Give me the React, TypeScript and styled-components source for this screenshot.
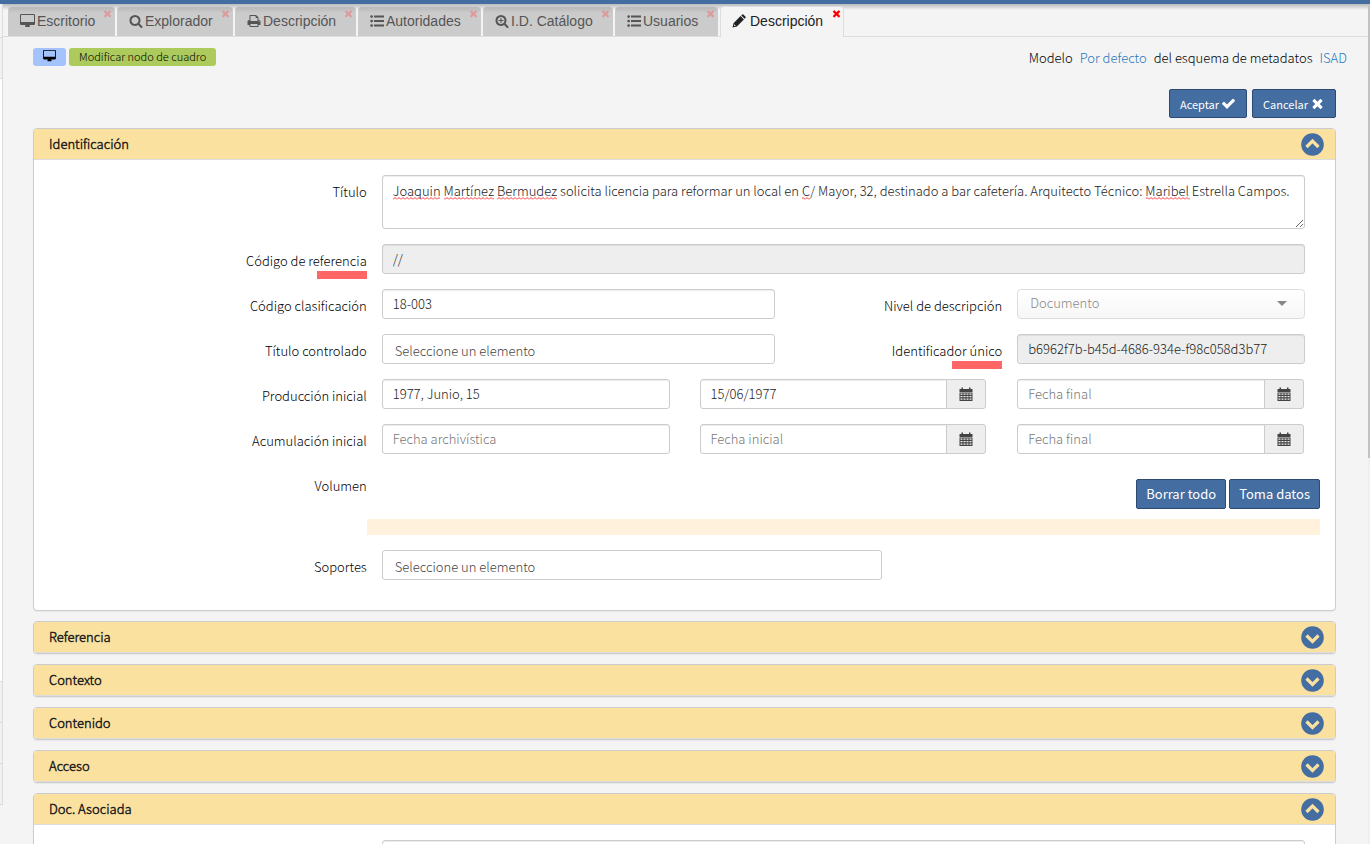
import React from 'react';
import styled, { createGlobalStyle } from 'styled-components';

const regular = '"Noto Sans CJK SC", "Noto Sans", sans-serif';
const light = `"Noto Sans CJK SC Light", ${regular}`;

const Global = createGlobalStyle`
  *, *::before, *::after { box-sizing: border-box; }
  html { background: #f4f4f4; overflow-x: hidden; }
  body { margin: 0; font: 300 13px/20px ${light}; color: #000; overflow: hidden; height: 100vh; }
  button, input, textarea, select { font: inherit; }
`;

const paths = {
  desktop: 'M1728 992v-832q0-13-9.5-22.5t-22.5-9.5h-1600q-13 0-22.5 9.5t-9.5 22.5v832q0 13 9.5 22.5t22.5 9.5h1600q13 0 22.5-9.5t9.5-22.5zm128-832v1088q0 66-47 113t-113 47h-544q0 37 16 77.5t32 71 16 43.5q0 26-19 45t-45 19h-512q-26 0-45-19t-19-45q0-14 16-44t32-70 16-78h-544q-66 0-113-47t-47-113v-1088q0-66 47-113t113-47h1600q66 0 113 47t47 113z',
  search: 'M1216 832q0-185-131.5-316.5t-316.5-131.5-316.5 131.5-131.5 316.5 131.5 316.5 316.5 131.5 316.5-131.5 131.5-316.5zm512 832q0 52-38 90t-90 38q-54 0-90-38l-343-342q-179 124-399 124-143 0-273.5-55.5t-225-150-150-225-55.5-273.5 55.5-273.5 150-225 225-150 273.5-55.5 273.5 55.5 225 150 150 225 55.5 273.5q0 220-124 399l343 343q37 37 37 90z',
  zoom: 'M1088 800v64q0 13-9.5 22.5t-22.5 9.5h-224v224q0 13-9.5 22.5t-22.5 9.5h-64q-13 0-22.5-9.5t-9.5-22.5v-224h-224q-13 0-22.5-9.5t-9.5-22.5v-64q0-13 9.5-22.5t22.5-9.5h224v-224q0-13 9.5-22.5t22.5-9.5h64q13 0 22.5 9.5t9.5 22.5v224h224q13 0 22.5 9.5t9.5 22.5zm128 32q0-185-131.5-316.5t-316.5-131.5-316.5 131.5-131.5 316.5 131.5 316.5 316.5 131.5 316.5-131.5 131.5-316.5zm512 832q0 53-37.5 90.5t-90.5 37.5q-54 0-90-38l-343-342q-179 124-399 124-143 0-273.5-55.5t-225-150-150-225-55.5-273.5 55.5-273.5 150-225 225-150 273.5-55.5 273.5 55.5 225 150 150 225 55.5 273.5q0 220-124 399l343 343q37 37 37 90z',
  print: 'M448 1536h896v-256h-896v256zm0-640h896v-384h-160q-40 0-68-28t-28-68v-160h-640v640zm1152 64q0-26-19-45t-45-19-45 19-19 45 19 45 45 19 45-19 19-45zm128 0v416q0 13-9.5 22.5t-22.5 9.5h-224v160q0 40-28 68t-68 28h-960q-40 0-68-28t-28-68v-160h-224q-13 0-22.5-9.5t-9.5-22.5v-416q0-79 56.5-135.5t135.5-56.5h64v-544q0-40 28-68t68-28h672q40 0 88 20t76 48l152 152q28 28 48 76t20 88v256h64q79 0 135.5 56.5t56.5 135.5z',
  list: 'M384 1472a176 176 0 1 1-352 0 176 176 0 0 1 352 0zM384 896a176 176 0 1 1-352 0 176 176 0 0 1 352 0zM384 320a176 176 0 1 1-352 0 176 176 0 0 1 352 0zM512 1344h1280v256H512zM512 768h1280v256H512zM512 192h1280v256H512z',
  pencil: 'M64 1728l130-560 900-900 430 430-900 900zM300 1300l-50 240 240-50zM1186 176l120-120q70-60 140 0l290 290q60 70 0 140l-120 120z',
  check: 'M1671 566q0 40-28 68l-724 724-136 136q-28 28-68 28t-68-28l-136-136-362-362q-28-28-28-68t28-68l136-136q28-28 68-28t68 28l294 295 656-657q28-28 68-28t68 28l136 136q28 28 28 68z',
  times: 'M1490 1322q0 40-28 68l-136 136q-28 28-68 28t-68-28l-294-294-294 294q-28 28-68 28t-68-28l-136-136q-28-28-28-68t28-68l294-294-294-294q-28-28-28-68t28-68l136-136q28-28 68-28t68 28l294 294 294-294q28-28 68-28t68 28l136 136q28 28 28 68t-28 68l-294 294 294 294q28 28 28 68z',
  calendar: 'M64 256h256V64h192v192h768V64h192v192h256v384H64zM64 700h1664v1092H64zM192 832v160h256V832zm384 0v160h256V832zm384 0v160h256V832zm384 0v160h256V832zM192 1152v160h256v-160zm384 0v160h256v-160zm384 0v160h256v-160zm384 0v160h256v-160zM192 1472v160h256v-160zm384 0v160h256v-160zm384 0v160h256v-160zm384 0v160h256v-160z',
};
type IconName = keyof typeof paths;

const Glyph = styled.svg`
  display: block;
  flex: none;
  fill: currentColor;
`;

function Icon({ name, size = 14 }: { name: IconName; size?: number }) {
  const wide = name === 'desktop';
  return (
    <Glyph
      width={wide ? size + 1 : size}
      height={size}
      viewBox={wide ? '-64 0 1920 1792' : '0 0 1792 1792'}
      fillRule="evenodd"
      aria-hidden="true"
    >
      <path d={paths[name]} />
    </Glyph>
  );
}

const Page = styled.div`
  display: grid;
  grid-template-columns: 3px minmax(0, 1fr) 2px;
  grid-template-rows: 4px auto;
  min-height: 100vh;
`;
const TopBar = styled.header`
  grid-column: 1 / -1;
  background: #446da1;
`;
const SideEdge = styled.aside`
  display: flex;
  flex-direction: column;
  border-right: 1px solid #ddd;
  height: 801px;
  background: #fff;
`;
const EdgeItem = styled.div<{ $h: number; $c: string }>`
  height: ${(p) => p.$h}px;
  background: ${(p) => p.$c};
  border-bottom: 1px solid #d8dbe0;
`;
const ScrollTrack = styled.div`
  background: #f0f0f0;
`;
const ScrollThumb = styled.div`
  height: 454px;
  background: #c2c2c2;
`;
const TabBar = styled.nav`
  display: flex;
  align-items: flex-end;
  gap: 2px;
  height: 33px;
  padding: 0 0 0 5px;
  border-bottom: 1px solid #ddd;
  background: linear-gradient(#bbb, #f4f4f4 6px);
`;
const Tab = styled.div<{ $w: number; $active?: boolean }>`
  position: relative;
  display: flex;
  align-items: center;
  width: ${(p) => p.$w}px;
  height: ${(p) => (p.$active ? 31 : 30)}px;
  margin-bottom: ${(p) => (p.$active ? -1 : 0)}px;
  padding: 0 0 ${(p) => (p.$active ? 3 : 1)}px 11px;
  border: 1px solid ${(p) => (p.$active ? '#ddd' : '#ccc')};
  border-bottom: 0;
  border-radius: 4px 4px 0 0;
  background: ${(p) => (p.$active ? '#f4f4f4' : 'linear-gradient(#b8b8b8, #cbcbcb 6px)')};
  color: ${(p) => (p.$active ? '#222' : '#555')};
`;
const TabLabel = styled.a<{ $gap: number }>`
  display: flex;
  align-items: center;
  gap: ${(p) => p.$gap}px;
  color: inherit;
  text-decoration: none;
  white-space: nowrap;
  font: 14px/20px "Liberation Sans", Arial, sans-serif;
`;
const TabClose = styled.button<{ $active?: boolean }>`
  position: absolute;
  top: 1px;
  right: 1px;
  padding: 0;
  border: 0;
  background: none;
  color: ${(p) => (p.$active ? '#f00' : '#dd9c9c')};
`;
const Content = styled.main`
  padding: 11px 32px 0 30px;
`;
const InfoBar = styled.div`
  display: flex;
  align-items: flex-start;
  gap: 3px;
  height: 41px;
  margin-right: -11px;
`;
const Badge = styled.span<{ $c: string }>`
  display: flex;
  align-items: center;
  height: 18px;
  padding: 0 10px 2px;
  border-radius: 3px;
  background: ${(p) => p.$c};
  font-size: 11px;
`;
const ModelInfo = styled.p`
  display: flex;
  gap: 7px;
  margin: 0 0 0 auto;
`;
const Link = styled.a`
  color: #2a78bd;
  text-decoration: none;
`;
const Actions = styled.div<{ $gap: number }>`
  display: flex;
  justify-content: flex-end;
  gap: ${(p) => p.$gap}px;
`;
const Button = styled.button<{ $small?: boolean }>`
  display: flex;
  align-items: center;
  gap: 2px;
  height: ${(p) => (p.$small ? 29 : 30)}px;
  padding: 0 ${(p) => (p.$small ? 10 : 9)}px;
  border: 1px solid #2d4a70;
  border-radius: 2px;
  background: #446da1;
  color: #fff;
  font-size: ${(p) => (p.$small ? 11 : 13)}px;
  font-family: ${regular};
  font-weight: 400;
  white-space: nowrap;
`;
const Panels = styled.div`
  display: flex;
  flex-direction: column;
  gap: 10px;
  margin-top: 10px;
`;
const PanelBox = styled.section`
  border: 1px solid #ccc;
  border-radius: 4px;
  background: #fff;
  box-shadow: 0 1px 1px rgba(0, 0, 0, 0.05);
`;
const PanelHead = styled.h2<{ $open?: boolean }>`
  display: flex;
  align-items: center;
  justify-content: space-between;
  height: 31px;
  margin: 0;
  padding: 0 11px 0 15px;
  border-bottom: 1px solid #ddd;
  border-radius: ${(p) => (p.$open ? '3px 3px 0 0' : '3px')};
  background: #fbe19f;
  color: #222;
  font-size: 13px;
  font-weight: 700;
`;
const Toggle = styled.button`
  display: flex;
  padding: 0;
  border: 0;
  background: none;
  color: #446da1;
`;
const PanelBody = styled.div`
  display: flex;
  flex-direction: column;
  gap: 15px;
  padding: 15px 15px 30px;
`;
const Row = styled.div`
  display: grid;
  grid-template-columns: repeat(12, minmax(0, 1fr));
`;
const Label = styled.label<{ $span: number }>`
  grid-column: span ${(p) => p.$span};
  padding-top: 7px;
  text-align: right;
  color: #000;
`;
const Marked = styled.span`
  position: relative;
  &::after {
    content: '';
    position: absolute;
    right: 0;
    bottom: -9px;
    width: 50px;
    height: 8px;
    background: #ff6666;
  }
`;
const Cell = styled.div<{ $span: number }>`
  grid-column: span ${(p) => p.$span};
  display: flex;
  padding: 0 15px;
`;
const Field = styled.input<{ $plain?: boolean; $joined?: boolean; $w?: number }>`
  flex: 1;
  min-width: 0;
  max-width: ${(p) => (p.$w ? p.$w + 'px' : 'none')};
  height: 30px;
  padding: ${(p) => (p.$plain ? '2px 12px 0' : '0 10px 2px')};
  border: 1px solid #ccc;
  border-radius: ${(p) => (p.$joined ? '3px 0 0 3px' : '3px')};
  background: #fff;
  box-shadow: ${(p) => (p.$plain ? 'none' : 'inset 0 1px 1px rgba(0, 0, 0, 0.075)')};
  color: #222;
  &:read-only { background: #eee; }
  &::placeholder { color: ${(p) => (p.$plain ? '#444' : '#777')}; opacity: 1; }
`;
const AreaWrap = styled.div`
  position: relative;
  display: flex;
  flex: 1;
`;
const Area = styled.textarea`
  flex: 1;
  height: 54px;
  padding: 5px 2px 5px 10px;
  border: 1px solid #ccc;
  border-radius: 3px;
  box-shadow: inset 0 1px 1px rgba(0, 0, 0, 0.075);
  background: #fff;
  color: #222;
`;
const Squiggles = styled.svg`
  position: absolute;
  left: 11px;
  top: 22px;
  width: 880px;
  height: 3px;
  pointer-events: none;
`;
const Select = styled.select`
  appearance: none;
  flex: 1;
  height: 30px;
  padding: 0 12px 2px;
  border: 1px solid #ddd;
  border-radius: 4px;
  background: linear-gradient(#fff, #f7f7f7);
  color: #888;
  opacity: 1;
`;
const SelectWrap = styled.div`
  position: relative;
  display: flex;
  flex: 1;
  &::after {
    content: '';
    position: absolute;
    right: 18px;
    top: 12px;
    border: 5px solid transparent;
    border-top-color: #888;
    border-bottom: 0;
    pointer-events: none;
  }
`;
const Addon = styled.button`
  display: flex;
  align-items: center;
  justify-content: center;
  width: 40px;
  height: 30px;
  margin: 0 1px 0 -1px;
  padding: 0;
  border: 1px solid #ccc;
  border-radius: 0 3px 3px 0;
  background: #eee;
  color: #444;
`;
const VolumeActions = styled(Actions)`
  grid-column: span 9;
  padding: 10px 0;
`;
const Strip = styled.div`
  grid-column: 4 / -1;
  height: 16px;
  background: #fff1dc;
`;

function Chevron({ open }: { open?: boolean }) {
  return (
    <svg width="23" height="23" viewBox="0 0 23 23" aria-hidden="true">
      <circle cx="11.5" cy="11.5" r="11.3" fill="currentColor" />
      <path d={open ? 'M5.5 14l6-6 6 6' : 'M5.5 9.5l6 6 6-6'} fill="none" stroke="#fbe19f" strokeWidth="3.2" />
    </svg>
  );
}

function SpellingMarks({ words }: { words: [number, number][] }) {
  return (
    <Squiggles aria-hidden="true">
      <defs>
        <pattern id="wave" width="4" height="3" patternUnits="userSpaceOnUse">
          <path d="M0 2.5l2-2 2 2" fill="none" stroke="#f33" />
        </pattern>
      </defs>
      {words.map(([x, w]) => (
        <rect key={x} x={x} width={w} height="3" fill="url(#wave)" />
      ))}
    </Squiggles>
  );
}

function Panel({ title, children }: { title: string; children?: React.ReactNode }) {
  const open = Boolean(children);
  return (
    <PanelBox>
      <PanelHead $open={open}>
        {title}
        <Toggle type="button" aria-label={title} aria-expanded={open}>
          <Chevron open={open} />
        </Toggle>
      </PanelHead>
      {children}
    </PanelBox>
  );
}

function DateField({ label, value }: { label: string; value?: string }) {
  return (
    <Cell $span={3}>
      <Field $joined aria-label={label} placeholder={label} defaultValue={value} />
      <Addon type="button" aria-label="Calendario">
        <Icon name="calendar" size={14} />
      </Addon>
    </Cell>
  );
}

const tabs: { icon: IconName; label: string; width: number; gap: number; active?: boolean }[] = [
  { icon: 'desktop', label: 'Escritorio', width: 107, gap: 2 },
  { icon: 'search', label: 'Explorador', width: 116, gap: 2 },
  { icon: 'print', label: 'Descripción', width: 121, gap: 2 },
  { icon: 'list', label: 'Autoridades', width: 123, gap: 2 },
  { icon: 'zoom', label: 'I.D. Catálogo', width: 130, gap: 2 },
  { icon: 'list', label: 'Usuarios', width: 103, gap: 2 },
  { icon: 'pencil', label: 'Descripción', width: 124, gap: 4, active: true },
];

export default function App() {
  return (
    <Page>
      <Global />
      <TopBar />
      <SideEdge>
        <EdgeItem $h={34} $c="#f4f4f4" />
        <EdgeItem $h={41} $c="#eef1f6" />
        <EdgeItem $h={603} $c="#fff" />
        <EdgeItem $h={41} $c="#eef1f6" />
        <EdgeItem $h={41} $c="#eef1f6" />
        <EdgeItem $h={41} $c="#eef1f6" />
      </SideEdge>
      <div>
        <TabBar>
          {tabs.map((t, i) => (
            <Tab key={i} $w={t.width} $active={t.active}>
              <TabLabel href="#" $gap={t.gap}>
                <Icon name={t.icon} size={14} />
                {t.label}
              </TabLabel>
              <TabClose type="button" aria-label="Cerrar" $active={t.active}>
                <Icon name="times" size={11} />
              </TabClose>
            </Tab>
          ))}
        </TabBar>
        <Content>
          <InfoBar>
            <Badge $c="#a4c2fc"><Icon name="desktop" size={12} /></Badge>
            <Badge $c="#adca5c">Modificar nodo de cuadro</Badge>
            <ModelInfo>
              Modelo <Link href="#">Por defecto</Link> del esquema de metadatos <Link href="#">ISAD</Link>
            </ModelInfo>
          </InfoBar>
          <Actions $gap={5}>
            <Button $small type="button">Aceptar<Icon name="check" size={15} /></Button>
            <Button $small type="button">Cancelar<Icon name="times" size={15} /></Button>
          </Actions>
          <Panels>
            <Panel title="Identificación">
              <PanelBody>
                <Row>
                  <Label $span={3} htmlFor="titulo">Título</Label>
                  <Cell $span={9}>
                    <AreaWrap>
                      <Area id="titulo" defaultValue="Joaquin Martínez Bermudez solicita licencia para reformar un local en C/ Mayor, 32, destinado a bar cafetería. Arquitecto Técnico: Maribel Estrella Campos." />
                      <SpellingMarks words={[[0, 47], [51, 50], [104, 60], [409, 8], [753, 44]]} />
                    </AreaWrap>
                  </Cell>
                </Row>
                <Row>
                  <Label $span={3} htmlFor="referencia"><Marked>Código de referencia</Marked></Label>
                  <Cell $span={9}><Field id="referencia" readOnly value="//" /></Cell>
                </Row>
                <Row>
                  <Label $span={3} htmlFor="clasificacion">Código clasificación</Label>
                  <Cell $span={4}><Field id="clasificacion" defaultValue="18-003" /></Cell>
                  <Label $span={2} htmlFor="nivel">Nivel de descripción</Label>
                  <Cell $span={3}>
                    <SelectWrap>
                      <Select id="nivel" disabled><option>Documento</option></Select>
                    </SelectWrap>
                  </Cell>
                </Row>
                <Row>
                  <Label $span={3} htmlFor="controlado">Título controlado</Label>
                  <Cell $span={4}><Field id="controlado" $plain placeholder="Seleccione un elemento" /></Cell>
                  <Label $span={2} htmlFor="unico"><Marked>Identificador único</Marked></Label>
                  <Cell $span={3}><Field id="unico" readOnly value="b6962f7b-b45d-4686-934e-f98c058d3b77" /></Cell>
                </Row>
                <Row>
                  <Label $span={3} htmlFor="produccion">Producción inicial</Label>
                  <Cell $span={3}><Field id="produccion" defaultValue="1977, Junio, 15" /></Cell>
                  <DateField label="Fecha inicial" value="15/06/1977" />
                  <DateField label="Fecha final" />
                </Row>
                <Row>
                  <Label $span={3} htmlFor="acumulacion">Acumulación inicial</Label>
                  <Cell $span={3}><Field id="acumulacion" placeholder="Fecha archivística" /></Cell>
                  <DateField label="Fecha inicial" />
                  <DateField label="Fecha final" />
                </Row>
                <Row>
                  <Label as="span" $span={3}>Volumen</Label>
                  <VolumeActions $gap={3}>
                    <Button type="button">Borrar todo</Button>
                    <Button type="button">Toma datos</Button>
                  </VolumeActions>
                  <Strip />
                </Row>
                <Row>
                  <Label $span={3} htmlFor="soportes">Soportes</Label>
                  <Cell $span={9}><Field id="soportes" $plain $w={500} placeholder="Seleccione un elemento" /></Cell>
                </Row>
              </PanelBody>
            </Panel>
            <Panel title="Referencia" />
            <Panel title="Contexto" />
            <Panel title="Contenido" />
            <Panel title="Acceso" />
            <Panel title="Doc. Asociada">
              <PanelBody>
                <Row>
                  <Cell $span={3} />
                  <Cell $span={9}><Area aria-label="Documentación asociada" /></Cell>
                </Row>
              </PanelBody>
            </Panel>
          </Panels>
        </Content>
      </div>
      <ScrollTrack><ScrollThumb /></ScrollTrack>
    </Page>
  );
}
